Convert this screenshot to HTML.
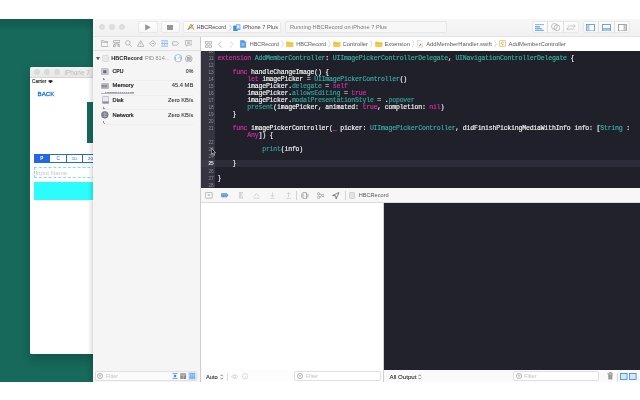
<!DOCTYPE html>
<html>
<head>
<meta charset="utf-8">
<title>Xcode</title>
<style>
*{box-sizing:border-box;margin:0;padding:0}
html,body{width:640px;height:400px;overflow:hidden;background:#fff;font-family:"Liberation Sans",sans-serif;}
body{position:relative}
#root{position:absolute;left:0;top:0;width:640px;height:400px;overflow:hidden;will-change:transform;filter:blur(0.35px)}
.a{position:absolute}
.tx{white-space:nowrap}
.row{position:relative;height:7.03px;width:439px}
.ln{position:absolute;left:0;top:0;width:12.6px;text-align:right;font-family:"Liberation Sans",sans-serif;font-size:4.7px;line-height:7.03px;color:#8a8c98;height:7.03px}
.ln.cur{color:#e8e8ee;font-weight:bold}
.cl{position:absolute;left:16.6px;top:0;font-family:"Liberation Mono",monospace;font-size:6.5px;letter-spacing:-0.186px;line-height:7.03px;height:7.03px;white-space:pre;color:#f6f6f6;-webkit-text-stroke:0.16px}
.k{color:#d92fa2}.t{color:#3bb0a4}.p{color:#33a79b}
</style>
</head>
<body>
<div id="root">
<div class="a" style="left:0.00px;top:19.00px;width:640.00px;height:362.60px;background:linear-gradient(#125c4f 0,#145f52 7px,#16695b 11px)"></div>
<div class="a" style="left:30.00px;top:67.00px;width:70.00px;height:286.60px;background:#fff;box-shadow:0 5px 11px rgba(0,0,0,.2);border-radius:2px 0 0 1.5px"></div>
<div class="a" style="left:30.00px;top:67.00px;width:70.00px;height:11.00px;background:linear-gradient(#f1f1f1,#e8e8e8);border-bottom:0.5px solid #d6d6d6;border-radius:2px 0 0 0"></div>
<div class="a" style="left:33.80px;top:69.40px;width:6.00px;height:6.00px;border-radius:50%;background:#dadada;"></div>
<div class="a" style="left:43.90px;top:69.40px;width:6.00px;height:6.00px;border-radius:50%;background:#dadada;"></div>
<div class="a" style="left:53.80px;top:69.40px;width:6.00px;height:6.00px;border-radius:50%;background:#dadada;"></div>
<div class="a tx" style="left:64.50px;top:68.56px;font-size:6.41px;line-height:7.69px;color:#b9b9b9;">iPhone 7</div>
<div class="a tx" style="left:32.00px;top:78.83px;font-size:4.71px;line-height:5.65px;color:#1e1e1e;-webkit-text-stroke:0.12px #1e1e1e;">Carrier</div>
<svg class="a" style="left:48.30px;top:80.00px;" width="5" height="3.4" viewBox="0 0 5 3.4"><path d="M0 0.9 Q2.5 -0.9 5 0.9 L2.5 3.4 Z" fill="#2a2a2a"/></svg>
<div class="a tx" style="left:37.50px;top:89.79px;font-size:6.21px;line-height:7.45px;color:#1a78e4;-webkit-text-stroke:0.3px #1a78e4;">BACK</div>
<div class="a" style="left:87.00px;top:102.20px;width:10.00px;height:41.00px;background:#16695b"></div>
<div class="a" style="left:34.00px;top:154.00px;width:66.00px;height:9.20px;background:#fff;border-top:0.5px solid #2467e3;border-bottom:0.5px solid #2467e3;border-left:0.5px solid #2467e3"></div>
<div class="a" style="left:34.00px;top:154.00px;width:16.10px;height:9.20px;background:#2467e3"></div>
<div class="a" style="left:66.10px;top:154.00px;width:0.50px;height:9.20px;background:#2467e3"></div>
<div class="a" style="left:82.20px;top:154.00px;width:0.50px;height:9.20px;background:#2467e3"></div>
<div class="a tx" style="left:40.37px;top:155.70px;font-size:4.60px;line-height:5.52px;color:#fff;font-weight:bold;">P</div>
<div class="a tx" style="left:56.54px;top:155.70px;font-size:4.60px;line-height:5.52px;color:#2467e3;">C</div>
<div class="a tx" style="left:71.85px;top:155.83px;font-size:4.40px;line-height:5.28px;color:#2467e3;">10</div>
<div class="a tx" style="left:87.95px;top:155.83px;font-size:4.40px;line-height:5.28px;color:#2467e3;">20</div>
<div class="a" style="left:34.00px;top:167.00px;width:66.00px;height:11.20px;background:#fff;border:0.5px dashed #7fdfea"></div>
<div class="a tx" style="left:35.40px;top:169.01px;font-size:6.17px;line-height:7.41px;color:#c4c4cc;">Input Name</div>
<div class="a" style="left:34.00px;top:181.50px;width:60.00px;height:18.00px;background:#2dfcfc"></div>
<div class="a" style="left:93.00px;top:19.00px;width:547.00px;height:363.00px;background:#f6f6f6;box-shadow:0 0 6px rgba(0,0,0,.28)"></div>
<div class="a" style="left:93.00px;top:19.00px;width:547.00px;height:17.00px;background:linear-gradient(#f7f7f7,#f1f1f1)"></div>
<div class="a" style="left:93.00px;top:36.00px;width:547.00px;height:0.80px;background:#e4e4e4"></div>
<div class="a" style="left:98.65px;top:23.85px;width:6.50px;height:6.50px;border-radius:50%;background:#dedede;"></div>
<div class="a" style="left:108.65px;top:23.85px;width:6.50px;height:6.50px;border-radius:50%;background:#dedede;"></div>
<div class="a" style="left:118.75px;top:23.85px;width:6.50px;height:6.50px;border-radius:50%;background:#dedede;"></div>
<div class="a" style="left:138.20px;top:21.20px;width:19.50px;height:12.00px;background:linear-gradient(#fdfdfd,#f7f7f7);border:0.6px solid #e8e8e8;border-radius:2.2px;"></div>
<svg class="a" style="left:144.60px;top:24.20px;" width="6" height="6.6" viewBox="0 0 6 6.6"><path d="M0.2 0.2 L5.8 3.3 L0.2 6.4Z" fill="#969696"/></svg>
<div class="a" style="left:160.50px;top:21.20px;width:19.50px;height:12.00px;background:linear-gradient(#fdfdfd,#f7f7f7);border:0.6px solid #e8e8e8;border-radius:2.2px;"></div>
<div class="a" style="left:167.20px;top:24.60px;width:5.80px;height:5.80px;background:#969696"></div>
<div class="a" style="left:183.10px;top:21.20px;width:98.20px;height:12.00px;background:linear-gradient(#fdfdfd,#f7f7f7);border:0.6px solid #e8e8e8;border-radius:2.2px;"></div>
<svg class="a" style="left:186.80px;top:23.20px;" width="8" height="8" viewBox="0 0 8 8"><path d="M0.8 7 L3.9 1 L7 7 M2 5 H6" stroke="#dea03a" stroke-width="1.0" fill="none"/><path d="M1 6.5 L6.5 1.5" stroke="#4a7fc0" stroke-width="0.9"/></svg>
<div class="a tx" style="left:196.40px;top:23.87px;font-size:5.60px;line-height:6.73px;color:#4c4c4c;">HBCRecord</div>
<svg class="a" style="left:228.60px;top:23.80px;" width="3" height="7" viewBox="0 0 3 7"><path d="M0.5 0.3 L2.5 3.5 L0.5 6.7" stroke="#b5b5b5" stroke-width="0.6" fill="none"/></svg>
<svg class="a" style="left:233.00px;top:23.60px;" width="7.6" height="7.4" viewBox="0 0 7.6 7.4"><rect x="0.2" y="1.6" width="4.6" height="5.6" rx="0.6" fill="#3d8fe0"/><rect x="3" y="0.2" width="4.4" height="5.8" rx="0.6" fill="#62a8ea"/><rect x="3.8" y="1.1" width="2.8" height="3.4" fill="#dcecfa"/></svg>
<div class="a tx" style="left:243.10px;top:23.84px;font-size:5.66px;line-height:6.79px;color:#4c4c4c;">iPhone 7 Plus</div>
<div class="a" style="left:285.00px;top:21.20px;width:161.80px;height:12.00px;background:#f7f7f7;border:0.6px solid #e6e6e6;border-radius:2.2px;"></div>
<div class="a tx" style="left:290.00px;top:23.84px;font-size:5.65px;line-height:6.78px;color:#7a7a7a;">Running HBCRecord on iPhone 7 Plus</div>
<div class="a" style="left:531.70px;top:21.20px;width:47.20px;height:12.00px;background:linear-gradient(#fdfdfd,#f7f7f7);border:0.6px solid #e8e8e8;border-radius:2.2px;"></div>
<div class="a" style="left:547.30px;top:21.80px;width:0.60px;height:10.80px;background:#dedede"></div>
<div class="a" style="left:563.00px;top:21.80px;width:0.60px;height:10.80px;background:#dedede"></div>
<svg class="a" style="left:535.00px;top:23.60px;" width="9.4" height="7.4" viewBox="0 0 9.4 7.4"><g stroke="#4a90e2" stroke-width="0.7" fill="none"><path d="M0 0.6 H9.4 M0 2.6 H5 M0 4.6 H7 M0 6.6 H9.2"/></g><rect x="0" y="2.6" width="5" height="2" fill="#4a90e2" opacity=".3"/><rect x="0" y="4.8" width="8" height="1.8" fill="#4a90e2" opacity=".25"/></svg>
<svg class="a" style="left:550.60px;top:23.20px;" width="9.6" height="8.2" viewBox="0 0 9.6 8.2"><g stroke="#9a9a9a" stroke-width="0.6" fill="none"><circle cx="3.4" cy="3.4" r="2.9"/><circle cx="6" cy="4.8" r="2.9"/></g></svg>
<svg class="a" style="left:566.40px;top:24.00px;" width="10" height="7" viewBox="0 0 10 7"><g stroke="#a8a8a8" stroke-width="0.6" fill="none"><path d="M1.6 2 H9.2 M7.6 0.4 L9.2 2 L7.6 3.6"/><path d="M8.4 5 H0.8 M2.4 3.4 L0.8 5 L2.4 6.6"/></g></svg>
<div class="a" style="left:582.60px;top:21.20px;width:47.40px;height:12.00px;background:linear-gradient(#fdfdfd,#f7f7f7);border:0.6px solid #e8e8e8;border-radius:2.2px;"></div>
<div class="a" style="left:598.30px;top:21.80px;width:0.60px;height:10.80px;background:#dedede"></div>
<div class="a" style="left:614.10px;top:21.80px;width:0.60px;height:10.80px;background:#dedede"></div>
<svg class="a" style="left:586.20px;top:23.60px;" width="9" height="7.4" viewBox="0 0 9 7.4"><rect x="0.45" y="0.45" width="8.1" height="6.5" fill="#fdfdfd" stroke="#4a90e2" stroke-width="0.8"/><rect x="0.8" y="0.8" width="1.9" height="5.8" fill="#b9d4f4"/><path d="M2.9 0.5 V6.9" stroke="#4a90e2" stroke-width="0.55"/></svg>
<svg class="a" style="left:602.00px;top:23.60px;" width="9" height="7.4" viewBox="0 0 9 7.4"><rect x="0.45" y="0.45" width="8.1" height="6.5" fill="#fdfdfd" stroke="#4a90e2" stroke-width="0.8"/><rect x="0.8" y="4.6" width="7.4" height="2" fill="#9fc4f0"/><path d="M0.5 4.5 H8.5" stroke="#4a90e2" stroke-width="0.55"/></svg>
<svg class="a" style="left:617.80px;top:23.60px;" width="9" height="7.4" viewBox="0 0 9 7.4"><rect x="0.45" y="0.45" width="8.1" height="6.5" fill="#fdfdfd" stroke="#8e8e8e" stroke-width="0.8"/><rect x="6.3" y="0.8" width="1.9" height="5.8" fill="#cfcfcf"/><path d="M6.1 0.5 V6.9" stroke="#8e8e8e" stroke-width="0.55"/></svg>
<div class="a" style="left:93.00px;top:36.80px;width:107.00px;height:345.20px;background:#f5f5f5"></div>
<div class="a" style="left:200.00px;top:36.80px;width:0.90px;height:345.20px;background:#cdcdcd"></div>
<div class="a" style="left:93.00px;top:50.20px;width:107.00px;height:0.70px;background:#e0e0e0"></div>
<svg class="a" style="left:100.70px;top:40.20px;" width="7.4" height="7" viewBox="0 0 7.4 7"><path d="M0.4 1.6 V6.5 H7 V1.6 H3.4 L2.8 0.6 H0.4 Z M0.4 2.3 H7" stroke="#9c9c9c" stroke-width="0.65" fill="none"/></svg>
<svg class="a" style="left:112.80px;top:40.20px;" width="7.4" height="7" viewBox="0 0 7.4 7"><path d="M0.6 0.5 H6.8 V2.6 H0.6 Z M3.7 2.6 V4 M1.4 5 V4 H6 V5" stroke="#9c9c9c" stroke-width="0.65" fill="none"/><rect x="0.4" y="5" width="2" height="1.6" stroke="#9c9c9c" stroke-width="0.65" fill="none"/><rect x="5" y="5" width="2" height="1.6" stroke="#9c9c9c" stroke-width="0.65" fill="none"/></svg>
<svg class="a" style="left:124.50px;top:40.20px;" width="7.4" height="7" viewBox="0 0 7.4 7"><circle cx="2.9" cy="2.9" r="2.3" stroke="#9c9c9c" stroke-width="0.65" fill="none"/><path d="M4.6 4.6 L6.8 6.8" stroke="#9c9c9c" stroke-width="0.65" fill="none"/></svg>
<svg class="a" style="left:136.50px;top:40.20px;" width="7.4" height="7" viewBox="0 0 7.4 7"><path d="M3.7 0.6 L7 6.4 H0.4 Z M3.7 2.6 V4.4 M3.7 5 V5.6" stroke="#9c9c9c" stroke-width="0.65" fill="none"/></svg>
<svg class="a" style="left:148.60px;top:40.20px;" width="7.4" height="7" viewBox="0 0 7.4 7"><path d="M3.7 0.4 L7 3.5 L3.7 6.6 L0.4 3.5 Z M2.4 3.5 H5" stroke="#9c9c9c" stroke-width="0.65" fill="none"/></svg>
<svg class="a" style="left:160.80px;top:40.20px;" width="7.4" height="7" viewBox="0 0 7.4 7"><path d="M0.2 0.8 H7.2 M0.2 3.5 H7.2 M0.2 6.2 H7.2" stroke="#4a90e2" stroke-width="0.55" fill="none"/><path d="M0.7 2.15 H1.7 M3.2 2.15 H4.2 M5.7 2.15 H6.7 M0.7 4.85 H1.7 M3.2 4.85 H4.2 M5.7 4.85 H6.7" stroke="#4a90e2" stroke-width="0.9" opacity=".75"/></svg>
<svg class="a" style="left:172.40px;top:40.20px;" width="7.4" height="7" viewBox="0 0 7.4 7"><path d="M0.6 1.8 H5 L6.8 3.5 L5 5.2 H0.6 Z" stroke="#9c9c9c" stroke-width="0.65" fill="none"/></svg>
<svg class="a" style="left:184.90px;top:40.20px;" width="7.4" height="7" viewBox="0 0 7.4 7"><path d="M0.4 0.6 H7 V5 H2.6 L1.6 6.2 V5 H0.4 Z M2.2 2.2 H5.2 M2.2 3.4 H5.2" stroke="#9c9c9c" stroke-width="0.65" fill="none"/></svg>
<svg class="a" style="left:95.70px;top:56.60px;" width="4" height="3.4" viewBox="0 0 4 3.4"><path d="M0 0 H4 L2 3.4 Z" fill="#5a5a5a"/></svg>
<div class="a" style="left:101.80px;top:55.00px;width:7.40px;height:7.20px;background:#e9e9e9;border:0.4px solid #dcdcdc;border-radius:1.4px"></div>
<div class="a tx" style="left:111.30px;top:54.99px;font-size:5.58px;line-height:6.69px;color:#222;font-weight:bold;">HBCRecord</div>
<div class="a tx" style="left:144.90px;top:55.04px;font-size:5.49px;line-height:6.58px;color:#8c8c8c;">PID 814...</div>
<svg class="a" style="left:174.00px;top:54.20px;" width="8.4" height="8.4" viewBox="0 0 8.4 8.4"><circle cx="4.2" cy="4.2" r="3.7" stroke="#5c9fe8" stroke-width="0.6" fill="#fdfdfd"/><path d="M4.2 4.6 L6.2 2.4" stroke="#4a8fe0" stroke-width="0.7"/><path d="M2 6 A3 3 0 0 1 1.6 3 M6.8 3 A3 3 0 0 1 6.4 6" stroke="#4a8fe0" stroke-width="0.6" fill="none"/></svg>
<svg class="a" style="left:185.40px;top:54.60px;" width="7.6" height="7.6" viewBox="0 0 7.6 7.6"><circle cx="3.8" cy="3.8" r="3.3" stroke="#8e8e8e" stroke-width="0.65" fill="none"/><rect x="2.4" y="2.2" width="2.8" height="3.2" fill="#b8b8b8" stroke="#8a8a8a" stroke-width="0.4"/><path d="M1.9 3 H2.4 M1.9 4.6 H2.4 M5.2 3 H5.7 M5.2 4.6 H5.7" stroke="#8a8a8a" stroke-width="0.4"/></svg>
<div class="a tx" style="left:112.60px;top:68.05px;font-size:5.16px;line-height:6.20px;color:#1c1c1c;-webkit-text-stroke:0.22px #1c1c1c;">CPU</div>
<div class="a tx" style="left:185.80px;top:68.03px;font-size:5.19px;line-height:6.23px;color:#333;-webkit-text-stroke:0.08px #333;">0%</div>
<div class="a" style="left:101.40px;top:80.00px;width:92.00px;height:0.60px;background:#eeeeee"></div>
<div class="a" style="left:103.20px;top:77.60px;width:0.60px;height:2.00px;background:#8a8a8a"></div>
<div class="a" style="left:104.40px;top:79.10px;width:0.60px;height:0.60px;background:#9a9a9a"></div>
<div class="a tx" style="left:112.60px;top:82.44px;font-size:5.81px;line-height:6.98px;color:#1c1c1c;-webkit-text-stroke:0.22px #1c1c1c;">Memory</div>
<div class="a tx" style="left:171.70px;top:82.45px;font-size:5.80px;line-height:6.96px;color:#333;-webkit-text-stroke:0.08px #333;">45.4 MB</div>
<div class="a" style="left:101.40px;top:94.55px;width:92.00px;height:0.60px;background:#eeeeee"></div>
<div class="a tx" style="left:112.60px;top:97.17px;font-size:5.61px;line-height:6.73px;color:#1c1c1c;-webkit-text-stroke:0.22px #1c1c1c;">Disk</div>
<div class="a tx" style="left:168.00px;top:97.11px;font-size:5.69px;line-height:6.83px;color:#333;-webkit-text-stroke:0.08px #333;">Zero KB/s</div>
<div class="a" style="left:101.40px;top:109.10px;width:92.00px;height:0.60px;background:#eeeeee"></div>
<div class="a" style="left:103.20px;top:106.70px;width:0.60px;height:2.00px;background:#8a8a8a"></div>
<div class="a" style="left:104.40px;top:108.20px;width:0.60px;height:0.60px;background:#9a9a9a"></div>
<div class="a tx" style="left:112.60px;top:111.76px;font-size:5.78px;line-height:6.94px;color:#1c1c1c;-webkit-text-stroke:0.22px #1c1c1c;">Network</div>
<div class="a tx" style="left:168.00px;top:111.81px;font-size:5.69px;line-height:6.83px;color:#333;-webkit-text-stroke:0.08px #333;">Zero KB/s</div>
<div class="a" style="left:101.40px;top:123.65px;width:92.00px;height:0.60px;background:#eeeeee"></div>
<div class="a" style="left:103.20px;top:121.25px;width:0.60px;height:2.00px;background:#8a8a8a"></div>
<div class="a" style="left:104.40px;top:122.75px;width:0.60px;height:0.60px;background:#9a9a9a"></div>
<svg class="a" style="left:101.40px;top:68.00px;" width="7.6" height="7.4" viewBox="0 0 7.6 7.4"><rect x="0.3" y="0.3" width="7" height="6.8" rx="1" fill="#c9c9cf" stroke="#a9a9b0" stroke-width="0.5"/><rect x="2.2" y="2.2" width="3.2" height="3" fill="#6d6d78"/></svg>
<svg class="a" style="left:101.20px;top:82.60px;" width="8" height="6.4" viewBox="0 0 8 6.4"><rect x="0.3" y="0.6" width="7.4" height="5" rx="0.6" fill="#b9bac4" stroke="#9a9ba6" stroke-width="0.5"/><path d="M1.4 2 V4.4 M2.8 2 V4.4 M4.2 2 V4.4 M5.6 2 V4.4" stroke="#6d6e7c" stroke-width="0.8"/></svg>
<svg class="a" style="left:101.60px;top:96.40px;" width="7.2" height="7.8" viewBox="0 0 7.2 7.8"><rect x="0.4" y="0.4" width="6.4" height="7" rx="1" fill="#e9e9ee" stroke="#9a9ba6" stroke-width="0.6"/><rect x="0.4" y="5.4" width="6.4" height="2" fill="#8e8f9b"/></svg>
<svg class="a" style="left:101.40px;top:111.20px;" width="7.6" height="7.6" viewBox="0 0 7.6 7.6"><circle cx="3.8" cy="3.8" r="3.4" fill="#74768a" stroke="#5c5e70" stroke-width="0.5"/><path d="M0.6 3.8 H7 M3.8 0.6 V7 M1.6 1.8 Q3.8 3 6 1.8 M1.6 5.8 Q3.8 4.6 6 5.8" stroke="#d5d6de" stroke-width="0.4" fill="none"/></svg>
<div class="a" style="left:104.50px;top:92.00px;width:29.30px;height:1.30px;background:repeating-linear-gradient(90deg,#a3a3ad 0,#a3a3ad 1.4px,#cfcfd5 1.4px,#cfcfd5 2.1px)"></div>
<div class="a" style="left:101.40px;top:93.20px;width:32.40px;height:0.50px;background:#b4b4bc"></div>
<div class="a" style="left:95.00px;top:371.30px;width:102.40px;height:9.60px;background:#fbfbfb;border:0.5px solid #e0e0e0;border-radius:2px"></div>
<svg class="a" style="left:97.30px;top:373.20px;" width="6" height="6" viewBox="0 0 6 6"><circle cx="3" cy="3" r="2.6" stroke="#8a8a8a" stroke-width="0.6" fill="none"/><path d="M1.6 2.2 H4.4 M2.1 3.2 H3.9 M2.7 4.1 H3.3" stroke="#8a8a8a" stroke-width="0.5"/></svg>
<div class="a tx" style="left:106.00px;top:372.90px;font-size:5.40px;line-height:6.48px;color:#c3c3c3;">Filter</div>
<svg class="a" style="left:171.80px;top:373.20px;" width="6" height="6" viewBox="0 0 6 6"><path d="M0.4 0.6 H5.6 M0.4 5.4 H5.6" stroke="#4a90e2" stroke-width="0.8"/><path d="M1.8 1.8 H4.2 V4.2 H1.8Z" fill="#4a90e2"/></svg>
<svg class="a" style="left:180.20px;top:373.00px;" width="6.4" height="6.4" viewBox="0 0 6.4 6.4"><rect x="0.3" y="0.3" width="5.8" height="5.8" fill="#8a8a8a"/><path d="M0.3 2 H6.1 M3.2 2 V6" stroke="#e8e8e8" stroke-width="0.6"/></svg>
<div class="a" style="left:188.20px;top:372.40px;width:7.40px;height:7.40px;background:#cfe2f8;border-radius:1px"></div>
<svg class="a" style="left:188.80px;top:373.00px;" width="6.4" height="6.4" viewBox="0 0 6.4 6.4"><path d="M0.4 0.6 H6 M0.4 3.2 H6 M0.4 5.8 H6" stroke="#4a90e2" stroke-width="0.7"/><path d="M0.6 1.9 H1.8 M2.6 1.9 H3.8 M4.6 1.9 H5.8 M0.6 4.5 H1.8 M2.6 4.5 H3.8 M4.6 4.5 H5.8" stroke="#4a90e2" stroke-width="1"/></svg>
<div class="a" style="left:201.00px;top:36.80px;width:439.00px;height:14.20px;background:#fff"></div>
<svg class="a" style="left:204.70px;top:40.70px;" width="7" height="7" viewBox="0 0 7 7"><rect x="0.4" y="0.4" width="2.6" height="2.6" rx="0.5" stroke="#8a8a8a" stroke-width="0.6" fill="none"/><rect x="4" y="0.4" width="2.6" height="2.6" rx="0.5" stroke="#8a8a8a" stroke-width="0.6" fill="none"/><rect x="0.4" y="4" width="2.6" height="2.6" rx="0.5" stroke="#8a8a8a" stroke-width="0.6" fill="none"/><rect x="4" y="4" width="2.6" height="2.6" rx="0.5" stroke="#8a8a8a" stroke-width="0.6" fill="none"/></svg>
<svg class="a" style="left:218.00px;top:40.80px;" width="3.6" height="6.8" viewBox="0 0 3.6 6.8"><path d="M3.2 0.4 L0.5 3.4 L3.2 6.4" stroke="#9a9a9a" stroke-width="0.7" fill="none"/></svg>
<svg class="a" style="left:229.60px;top:40.80px;" width="3.6" height="6.8" viewBox="0 0 3.6 6.8"><path d="M0.4 0.4 L3.1 3.4 L0.4 6.4" stroke="#c4c4c4" stroke-width="0.7" fill="none"/></svg>
<svg class="a" style="left:240.40px;top:39.90px;" width="6.2" height="7.8" viewBox="0 0 6.2 7.8"><path d="M0.4 0.4 H4 L5.8 2.2 V7.4 H0.4 Z" fill="#4f9be6" stroke="#2f7fd0" stroke-width="0.4"/><path d="M1.6 3.4 H4.6 M1.6 4.6 H4.6 M1.6 5.8 H4.6" stroke="#dcecfb" stroke-width="0.5"/></svg>
<div class="a tx" style="left:249.70px;top:41.05px;font-size:5.47px;line-height:6.57px;color:#5a5a5a;">HBCRecord</div>
<svg class="a" style="left:281.20px;top:40.40px;" width="2.8" height="7.6" viewBox="0 0 2.8 7.6"><path d="M0.4 0.3 L2.3 3.8 L0.4 7.3" stroke="#b9b9b9" stroke-width="0.55" fill="none"/></svg>
<svg class="a" style="left:286.20px;top:40.90px;" width="7.6" height="6.4" viewBox="0 0 7.6 6.4"><path d="M0.2 1.2 Q0.2 0.4 1 0.4 H2.8 L3.6 1.3 H6.8 Q7.4 1.3 7.4 2 V5.6 Q7.4 6.2 6.8 6.2 H0.8 Q0.2 6.2 0.2 5.6 Z" fill="#f5ca4c"/><path d="M0.2 2.3 H7.4" stroke="#e0ad25" stroke-width="0.5"/></svg>
<div class="a tx" style="left:296.20px;top:40.96px;font-size:5.62px;line-height:6.75px;color:#5a5a5a;">HBCRecord</div>
<svg class="a" style="left:328.00px;top:40.40px;" width="2.8" height="7.6" viewBox="0 0 2.8 7.6"><path d="M0.4 0.3 L2.3 3.8 L0.4 7.3" stroke="#b9b9b9" stroke-width="0.55" fill="none"/></svg>
<svg class="a" style="left:333.00px;top:40.90px;" width="7.6" height="6.4" viewBox="0 0 7.6 6.4"><path d="M0.2 1.2 Q0.2 0.4 1 0.4 H2.8 L3.6 1.3 H6.8 Q7.4 1.3 7.4 2 V5.6 Q7.4 6.2 6.8 6.2 H0.8 Q0.2 6.2 0.2 5.6 Z" fill="#f5ca4c"/><path d="M0.2 2.3 H7.4" stroke="#e0ad25" stroke-width="0.5"/></svg>
<div class="a tx" style="left:342.60px;top:40.81px;font-size:5.86px;line-height:7.03px;color:#5a5a5a;">Controller</div>
<svg class="a" style="left:369.90px;top:40.40px;" width="2.8" height="7.6" viewBox="0 0 2.8 7.6"><path d="M0.4 0.3 L2.3 3.8 L0.4 7.3" stroke="#b9b9b9" stroke-width="0.55" fill="none"/></svg>
<svg class="a" style="left:375.00px;top:40.90px;" width="7.6" height="6.4" viewBox="0 0 7.6 6.4"><path d="M0.2 1.2 Q0.2 0.4 1 0.4 H2.8 L3.6 1.3 H6.8 Q7.4 1.3 7.4 2 V5.6 Q7.4 6.2 6.8 6.2 H0.8 Q0.2 6.2 0.2 5.6 Z" fill="#f5ca4c"/><path d="M0.2 2.3 H7.4" stroke="#e0ad25" stroke-width="0.5"/></svg>
<div class="a tx" style="left:384.50px;top:40.84px;font-size:5.81px;line-height:6.97px;color:#5a5a5a;">Extension</div>
<svg class="a" style="left:411.70px;top:40.40px;" width="2.8" height="7.6" viewBox="0 0 2.8 7.6"><path d="M0.4 0.3 L2.3 3.8 L0.4 7.3" stroke="#b9b9b9" stroke-width="0.55" fill="none"/></svg>
<svg class="a" style="left:416.80px;top:40.20px;" width="6" height="7.6" viewBox="0 0 6 7.6"><path d="M0.4 0.4 H3.8 L5.6 2.2 V7.2 H0.4 Z" fill="#fbfbfb" stroke="#c4c4c4" stroke-width="0.5"/><path d="M1.6 5.4 Q3 6.2 4.4 5 Q3.6 3.6 2.2 3 Q3.4 4.2 3.2 4.8 Q2.4 5.2 1.6 5.4Z" fill="#e8543a"/></svg>
<div class="a tx" style="left:426.20px;top:40.79px;font-size:5.89px;line-height:7.07px;color:#5a5a5a;">AddMemberHandler.swift</div>
<svg class="a" style="left:493.90px;top:40.40px;" width="2.8" height="7.6" viewBox="0 0 2.8 7.6"><path d="M0.4 0.3 L2.3 3.8 L0.4 7.3" stroke="#b9b9b9" stroke-width="0.55" fill="none"/></svg>
<svg class="a" style="left:498.60px;top:40.40px;" width="7" height="7" viewBox="0 0 7 7"><rect x="0.4" y="0.4" width="6.2" height="6.2" rx="1" fill="#fdf6df" stroke="#c9a64c" stroke-width="0.6"/><path d="M4.6 2.6 Q3.6 1.8 2.8 2.6 Q2.2 3.5 2.8 4.4 Q3.6 5.2 4.6 4.4" stroke="#b08a2e" stroke-width="0.6" fill="none"/></svg>
<div class="a tx" style="left:508.60px;top:40.79px;font-size:5.89px;line-height:7.07px;color:#5a5a5a;">AddMemberController</div>
<div class="a" id="code" style="left:201px;top:51px;width:439px;height:137px;background:#1f202a;overflow:hidden">
<div class="a" style="left:0;top:0;width:14px;height:137px;background:#343541"></div>
<div class="a" style="left:0px;top:108.6px;width:439px;height:7px;background:#2c2d39"></div>
<div class="a" style="left:0px;top:108.6px;width:14px;height:7px;background:#3a3b48"></div>
<div class="a" id="lines" style="left:0;top:-2.78px;width:439px">
<div class="row"><div class="ln">10</div><div class="cl"></div></div>
<div class="row"><div class="ln">11</div><div class="cl"><span class="k">extension</span> <span class="t">AddMemberController</span>: <span class="t">UIImagePickerControllerDelegate</span>, <span class="t">UINavigationControllerDelegate</span> {</div></div>
<div class="row"><div class="ln">12</div><div class="cl"></div></div>
<div class="row"><div class="ln">13</div><div class="cl">    <span class="k">func</span> handleChangeImage() {</div></div>
<div class="row"><div class="ln">14</div><div class="cl">        <span class="k">let</span> imagePicker = <span class="t">UIImagePickerController</span>()</div></div>
<div class="row"><div class="ln">15</div><div class="cl">        imagePicker.<span class="p">delegate</span> = <span class="k">self</span></div></div>
<div class="row"><div class="ln">16</div><div class="cl">        imagePicker.<span class="p">allowsEditing</span> = <span class="k">true</span></div></div>
<div class="row"><div class="ln">17</div><div class="cl">        imagePicker.<span class="p">modalPresentationStyle</span> = .<span class="p">popover</span></div></div>
<div class="row"><div class="ln">18</div><div class="cl">        <span class="p">present</span>(imagePicker, animated: <span class="k">true</span>, completion: <span class="k">nil</span>)</div></div>
<div class="row"><div class="ln">19</div><div class="cl">    }</div></div>
<div class="row"><div class="ln">20</div><div class="cl"></div></div>
<div class="row"><div class="ln">21</div><div class="cl">    <span class="k">func</span> imagePickerController(<span class="k">_</span> picker: <span class="t">UIImagePickerController</span>, didFinishPickingMediaWithInfo info: [<span class="t">String</span> :</div></div>
<div class="row"><div class="ln"></div><div class="cl">        <span class="k">Any</span>]) {</div></div>
<div class="row"><div class="ln">22</div><div class="cl"></div></div>
<div class="row"><div class="ln">23</div><div class="cl">            <span class="p">print</span>(info)</div></div>
<div class="row"><div class="ln">24</div><div class="cl"></div></div>
<div class="row"><div class="ln cur">25</div><div class="cl">    }</div></div>
<div class="row"><div class="ln">26</div><div class="cl"></div></div>
<div class="row"><div class="ln">27</div><div class="cl">}</div></div>
<div class="row"><div class="ln">28</div><div class="cl"></div></div>
</div>
<svg class="a" style="left:9.5px;top:97.4px" width="5" height="8" viewBox="0 0 5 8"><path d="M0.4 0.3 V6.4 L1.8 5.1 L2.8 7.5 L3.7 7.1 L2.7 4.8 L4.6 4.7 Z" fill="#111" stroke="#fff" stroke-width="0.5"/></svg>
</div>
<div class="a" style="left:201.00px;top:188.00px;width:439.00px;height:14.20px;background:#f7f7f7"></div>
<div class="a" style="left:201.00px;top:202.20px;width:439.00px;height:0.80px;background:#dcdcdc"></div>
<svg class="a" style="left:205.20px;top:192.20px;" width="7.6" height="6.6" viewBox="0 0 7.6 6.6"><rect x="0.4" y="0.4" width="6.8" height="5.8" rx="0.8" stroke="#9a9a9a" stroke-width="0.65" fill="none"/><path d="M2.4 2.4 H5.2 L3.8 4 Z" fill="#9a9a9a"/></svg>
<svg class="a" style="left:220.80px;top:193.20px;" width="7.8" height="4.6" viewBox="0 0 7.8 4.6"><path d="M0.2 0.3 H5.6 L7.6 2.3 L5.6 4.3 H0.2 Z" fill="#4a90e2"/><path d="M1.2 1.2 L2.3 2.3 L1.2 3.4 M3 1.2 L4.1 2.3 L3 3.4 M4.8 1.2 L5.9 2.3 L4.8 3.4" stroke="#d8e8fa" stroke-width="0.5" fill="none"/></svg>
<svg class="a" style="left:238.60px;top:192.40px;" width="4.6" height="6.4" viewBox="0 0 4.6 6.4"><rect x="0.3" y="0.3" width="1.4" height="5.8" stroke="#c4c4c4" stroke-width="0.65" fill="none"/><rect x="2.9" y="0.3" width="1.4" height="5.8" stroke="#c4c4c4" stroke-width="0.65" fill="none"/></svg>
<svg class="a" style="left:253.20px;top:192.80px;" width="7" height="5.8" viewBox="0 0 7 5.8"><path d="M0.6 3.6 L3.5 0.6 L6.4 3.6 M0.6 5.2 H6.4" stroke="#c4c4c4" stroke-width="0.65" fill="none"/></svg>
<svg class="a" style="left:270.20px;top:192.20px;" width="5" height="6.8" viewBox="0 0 5 6.8"><path d="M2.5 0.3 V4.6 M0.9 3 L2.5 4.6 L4.1 3 M0.3 6.3 H4.7" stroke="#c4c4c4" stroke-width="0.65" fill="none"/></svg>
<svg class="a" style="left:286.20px;top:192.20px;" width="5" height="6.8" viewBox="0 0 5 6.8"><path d="M2.5 5 V0.6 M0.9 2.2 L2.5 0.6 L4.1 2.2 M0.3 6.3 H4.7" stroke="#c4c4c4" stroke-width="0.65" fill="none"/></svg>
<div class="a" style="left:296.40px;top:191.20px;width:0.60px;height:8.40px;background:#d4d4d4"></div>
<svg class="a" style="left:301.20px;top:192.00px;" width="7.4" height="7.2" viewBox="0 0 7.4 7.2"><rect x="1.9" y="0.4" width="3.6" height="6.4" rx="0.6" stroke="#7d7d7d" stroke-width="0.7" fill="none"/><path d="M0.4 1.6 V5.6 M7 1.6 V5.6" stroke="#7d7d7d" stroke-width="0.6"/></svg>
<svg class="a" style="left:316.80px;top:192.00px;" width="7.6" height="7.2" viewBox="0 0 7.6 7.2"><g stroke="#8a8a8a" stroke-width="0.6" fill="none"><circle cx="1.6" cy="1.8" r="1.2"/><circle cx="1.6" cy="5.4" r="1.2"/><circle cx="6" cy="3.4" r="1.2"/><path d="M2.8 2 L4.8 3.2 M2.8 5.2 L4.8 3.8"/></g></svg>
<svg class="a" style="left:332.40px;top:191.80px;" width="7.6" height="7.6" viewBox="0 0 7.6 7.6"><path d="M7 0.6 L0.6 3.5 L3.7 3.9 L4.1 7 Z" stroke="#3a3a3a" stroke-width="0.6" fill="#f7f7f7" stroke-linejoin="round"/></svg>
<div class="a" style="left:344.70px;top:191.20px;width:0.60px;height:8.40px;background:#d4d4d4"></div>
<div class="a" style="left:348.80px;top:192.20px;width:6.60px;height:6.60px;background:#e3e3e3;border:0.4px solid #d2d2d2;border-radius:1.2px"></div>
<div class="a tx" style="left:358.70px;top:192.16px;font-size:5.62px;line-height:6.75px;color:#5a5a5a;">HBCRecord</div>
<div class="a" style="left:201.00px;top:203.00px;width:182.40px;height:166.40px;background:#fff"></div>
<div class="a" style="left:383.20px;top:203.00px;width:0.80px;height:179.00px;background:#d0d0d0"></div>
<div class="a" style="left:384.00px;top:203.00px;width:256.00px;height:167.00px;background:#21222c"></div>
<div class="a" style="left:201.00px;top:369.40px;width:182.20px;height:12.60px;background:#fdfdfd"></div>
<div class="a" style="left:384.00px;top:370.00px;width:256.00px;height:12.00px;background:#fafafa"></div>
<div class="a tx" style="left:206.00px;top:374.02px;font-size:5.69px;line-height:6.83px;color:#2e2e2e;-webkit-text-stroke:0.1px #2e2e2e;">Auto</div>
<svg class="a" style="left:220.40px;top:374.00px;" width="3.4" height="6" viewBox="0 0 3.4 6"><path d="M0.5 2.2 L1.7 0.8 L2.9 2.2 M0.5 3.8 L1.7 5.2 L2.9 3.8" stroke="#4a4a4a" stroke-width="0.6" fill="none"/></svg>
<div class="a" style="left:227.10px;top:372.60px;width:0.60px;height:8.00px;background:#dedede"></div>
<svg class="a" style="left:230.60px;top:373.80px;" width="7.4" height="5.4" viewBox="0 0 7.4 5.4"><path d="M0.4 2.7 Q3.7 -1 7 2.7 Q3.7 6.4 0.4 2.7Z" stroke="#c4c4c4" stroke-width="0.55" fill="none"/><circle cx="3.7" cy="2.7" r="1.2" stroke="#c4c4c4" stroke-width="0.5" fill="none"/></svg>
<svg class="a" style="left:241.50px;top:373.30px;" width="6.4" height="6.4" viewBox="0 0 6.4 6.4"><circle cx="3.2" cy="3.2" r="2.8" stroke="#c4c4c4" stroke-width="0.55" fill="none"/><path d="M3.2 2.9 V4.7 M3.2 1.7 V2.2" stroke="#c4c4c4" stroke-width="0.55"/></svg>
<div class="a" style="left:294.20px;top:371.30px;width:86.60px;height:9.60px;background:#fff;border:0.5px solid #e0e0e0;border-radius:2px"></div>
<svg class="a" style="left:297.30px;top:373.20px;" width="6" height="6" viewBox="0 0 6 6"><circle cx="3" cy="3" r="2.6" stroke="#8a8a8a" stroke-width="0.6" fill="none"/><path d="M1.6 2.2 H4.4 M2.1 3.2 H3.9 M2.7 4.1 H3.3" stroke="#8a8a8a" stroke-width="0.5"/></svg>
<div class="a tx" style="left:306.00px;top:372.90px;font-size:5.40px;line-height:6.48px;color:#c3c3c3;">Filter</div>
<div class="a tx" style="left:389.60px;top:373.15px;font-size:6.10px;line-height:7.32px;color:#2e2e2e;-webkit-text-stroke:0.1px #2e2e2e;">All Output</div>
<svg class="a" style="left:418.20px;top:374.00px;" width="3.4" height="6" viewBox="0 0 3.4 6"><path d="M0.5 2.2 L1.7 0.8 L2.9 2.2 M0.5 3.8 L1.7 5.2 L2.9 3.8" stroke="#4a4a4a" stroke-width="0.6" fill="none"/></svg>
<div class="a" style="left:513.40px;top:371.30px;width:85.20px;height:9.60px;background:#fff;border:0.5px solid #e0e0e0;border-radius:2px"></div>
<svg class="a" style="left:516.00px;top:373.20px;" width="6" height="6" viewBox="0 0 6 6"><circle cx="3" cy="3" r="2.6" stroke="#8a8a8a" stroke-width="0.6" fill="none"/><path d="M1.6 2.2 H4.4 M2.1 3.2 H3.9 M2.7 4.1 H3.3" stroke="#8a8a8a" stroke-width="0.5"/></svg>
<div class="a tx" style="left:524.20px;top:372.78px;font-size:5.58px;line-height:6.70px;color:#c3c3c3;">Filter</div>
<svg class="a" style="left:607.20px;top:372.40px;" width="6.6" height="7.8" viewBox="0 0 6.6 7.8"><path d="M0.4 1.6 H6.2 M2.2 1.4 V0.5 H4.4 V1.4" stroke="#8a8a8a" stroke-width="0.7" fill="none"/><path d="M1 2.2 H5.6 L5.2 7.4 H1.4 Z" fill="#9a9a9a"/></svg>
<div class="a" style="left:617.20px;top:372.60px;width:0.60px;height:8.00px;background:#d6d6d6"></div>
<svg class="a" style="left:620.20px;top:372.80px;" width="7.6" height="7" viewBox="0 0 7.6 7"><rect x="0.5" y="0.5" width="6.6" height="6" fill="#d6e6f9" stroke="#4a90e2" stroke-width="0.9"/></svg>
<svg class="a" style="left:629.00px;top:372.80px;" width="7.6" height="7" viewBox="0 0 7.6 7"><rect x="0.5" y="0.5" width="6.6" height="6" fill="#d6e6f9" stroke="#4a90e2" stroke-width="0.9"/></svg>
<div class="a" style="left:0.00px;top:382.00px;width:640.00px;height:18.00px;background:#fff"></div>
<div class="a" style="left:0.00px;top:0.00px;width:640.00px;height:19.00px;background:#fff"></div>
</div>
</body>
</html>
